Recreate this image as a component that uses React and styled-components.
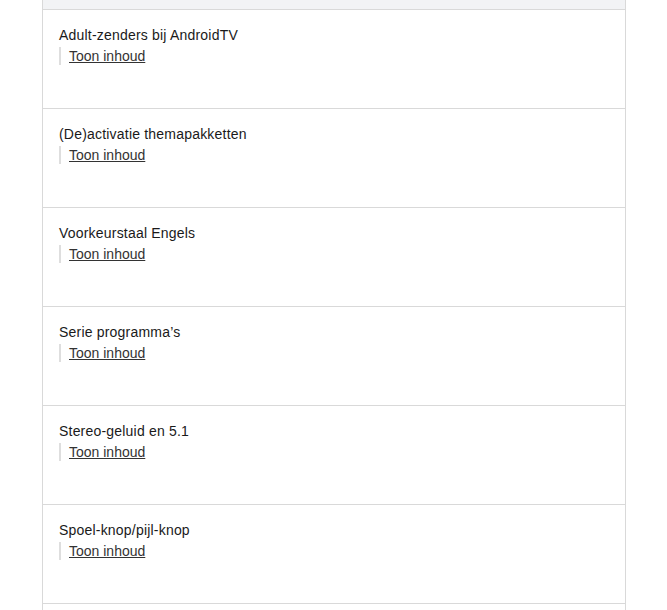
import React from "react";
import styled, { createGlobalStyle } from "styled-components";

const Global = createGlobalStyle`
  html, body { margin: 0; padding: 0; background: #fff; }
  body { font-family: "Liberation Sans", Arial, sans-serif; }
`;

const Page = styled.div`
  padding-left: 42px;
`;

const Panel = styled.div`
  width: 584px;
  box-sizing: border-box;
  border-left: 1px solid #d9d9d9;
  border-right: 1px solid #d9d9d9;
`;

const HeaderBand = styled.div`
  height: 9px;
  background: #f2f3f5;
`;

const Row = styled.div`
  box-sizing: border-box;
  height: 99px;
  border-top: 1px solid #d9d9d9;
  padding: 15px 16px 0;
`;

const Title = styled.div`
  font-family: "Liberation Sans", Arial, sans-serif;
  font-size: 14px;
  line-height: 20px;
  letter-spacing: 0.2px;
  color: #1a1a1a;
`;

const Toggle = styled.div`
  margin-top: 2px;
  border-left: 2px solid #dedede;
  padding-left: 8px;
  height: 18px;
  display: flex;
  align-items: center;
`;

const ToggleLink = styled.a`
  font-family: "Liberation Sans", Arial, sans-serif;
  font-size: 14px;
  line-height: 18px;
  color: #333;
  text-decoration: underline;
  cursor: pointer;
`;

const items = [
  "Adult-zenders bij AndroidTV",
  "(De)activatie themapakketten",
  "Voorkeurstaal Engels",
  "Serie programma\u2019s",
  "Stereo-geluid en 5.1",
  "Spoel-knop/pijl-knop",
  "",
];

export default function App() {
  return (
    <>
      <Global />
      <Page>
        <Panel>
          <HeaderBand />
          {items.map((t, i) => (
            <Row key={i}>
              {t && (
                <>
                  <Title>{t}</Title>
                  <Toggle>
                    <ToggleLink>Toon inhoud</ToggleLink>
                  </Toggle>
                </>
              )}
            </Row>
          ))}
        </Panel>
      </Page>
    </>
  );
}
